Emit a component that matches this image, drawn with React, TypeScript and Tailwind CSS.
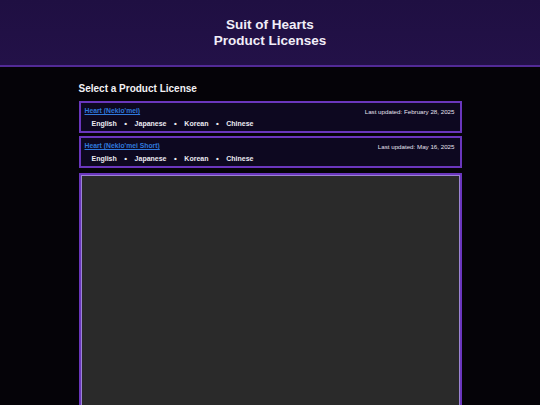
const licenses = [
  { name: "Heart (Neklo'mei)", updated: 'February 28, 2025' },
  { name: "Heart (Neklo'mei Short)", updated: 'May 16, 2025' },
];

const languages = ['English', 'Japanese', 'Korean', 'Chinese'];

function LicenseCard({ name, updated }: { name: string; updated: string }) {
  return (
    <div className="h-[32px] border-2 border-[#6a36bd] bg-[#0d0820] px-[4px] pt-[3px]">
      <div className="flex items-start justify-between">
        <a href="#" className="text-[6.8px] leading-[10px] font-bold text-[#2f78dc] underline">
          {name}
        </a>
        <span className="text-[6.2px] leading-[10px] text-[#e5e2ee] mt-[1px] mr-[1px]">
          Last updated: {updated}
        </span>
      </div>
      <div className="flex items-center gap-[7.5px] ml-[7px] mt-[2px] text-[7px] leading-[10px] font-bold text-[#ecebf2]">
        {languages.map((lang, i) => (
          <div key={lang} className="flex items-center gap-[7.5px]">
            {i > 0 && <span className="text-[8px] leading-[10px]">•</span>}
            <span>{lang}</span>
          </div>
        ))}
      </div>
    </div>
  );
}

export default function App() {
  return (
    <div
      className="h-[405px] overflow-hidden bg-gradient-to-b from-[#130a24] via-[#050308] via-[10%] to-[#050308]"
      style={{ fontFamily: '"Liberation Sans", Arial, sans-serif' }}
    >
      <header className="h-[67px] bg-gradient-to-b from-[#1f0f42] to-[#231148] border-b-2 border-[#522a96] flex flex-col items-center justify-center">
        <h1 className="text-[13.5px] leading-[16px] font-bold text-[#f1eef8] text-center">
          Suit of Hearts
          <br />
          Product Licenses
        </h1>
      </header>
      <main className="w-[383px] mx-auto">
        <h2 className="pt-[16px] pb-[6px] text-[10px] leading-[12px] font-bold text-[#f2f1f5]">
          Select a Product License
        </h2>
        <div className="flex flex-col gap-[3px]">
          {licenses.map((l) => (
            <LicenseCard key={l.name} {...l} />
          ))}
        </div>
        <div className="mt-[5px] h-[300px] border-2 border-[#6a36bd] bg-[#2a2a2a] shadow-[inset_0_0_0_1px_#9c84d4]" />
      </main>
    </div>
  );
}
